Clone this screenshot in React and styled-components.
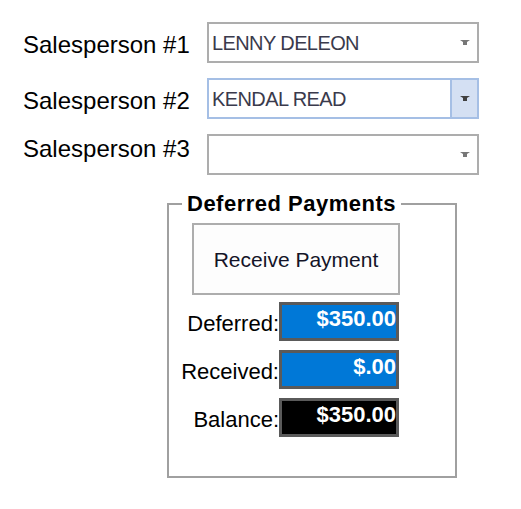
import React from 'react';
import styled, { createGlobalStyle } from 'styled-components';

const GlobalStyle = createGlobalStyle`
    html, body {
        margin: 0;
        padding: 0;
        background: #fff;
    }
    body {
        font-family: "Liberation Sans", Arial, sans-serif;
        color: #000;
    }
`

const Page = styled.div`
    padding: 22px 0 0 23px;
    width: 521px;
    height: 509px;
    box-sizing: border-box;
`

const SalesGrid = styled.div`
    display: grid;
    grid-template-columns: 184px 272px;
    grid-auto-rows: 41px;
    row-gap: 15px;
`

const SalesLabel = styled.div`
    font-size: 24px;
    line-height: 24px;
    padding-top: ${props => props.$lift ? '3px' : '11px'};
    white-space: nowrap;
`

const Combo = styled.div`
    display: flex;
    align-items: stretch;
    box-sizing: border-box;
    height: 41px;
    border: 2px solid ${props => props.$focused ? '#a5bfe5' : '#adadad'};
    background: #fff;
`

const ComboText = styled.div`
    flex: 1;
    display: flex;
    align-items: center;
    padding-left: 3px;
    font-size: 20px;
    line-height: 20px;
    letter-spacing: -0.6px;
    color: #3a3a4c;
    white-space: nowrap;
    overflow: hidden;
`

const DropButton = styled.div`
    width: 25px;
    display: flex;
    align-items: center;
    justify-content: center;
    border-left: 2px solid ${props => props.$focused ? '#a5bfe5' : 'transparent'};
    background: ${props => props.$focused ? '#d4e0f3' : 'transparent'};
`

const GroupBox = styled.fieldset`
    margin: 18px 0 0 144px;
    padding: 8px 0 39px 0;
    width: 290px;
    box-sizing: border-box;
    min-width: 0;
    border: 2px solid #a0a0a0;
`

const Legend = styled.legend`
    margin-left: 13px;
    padding: 0 5px;
    font-size: 22px;
    line-height: 22px;
    font-weight: bold;
    letter-spacing: 0.5px;
`

const ActionButton = styled.div`
    margin-left: 23px;
    width: 208px;
    height: 72px;
    box-sizing: border-box;
    border: 2px solid #adadad;
    background: #fdfdfd;
    display: flex;
    align-items: center;
    justify-content: center;
    font-size: 21px;
    line-height: 21px;
    color: #141428;
`

const AmountGrid = styled.div`
    margin-top: 7px;
    display: grid;
    grid-template-columns: 110px 120px;
    grid-auto-rows: 39px;
    row-gap: 9px;
`

const AmountLabel = styled.div`
    text-align: right;
    font-size: 22px;
    line-height: 22px;
    padding-top: 11px;
    white-space: nowrap;
`

const AmountField = styled.div`
    box-sizing: border-box;
    border: 3px solid #5a5a5a;
    background: ${props => props.$bg};
    color: #fff;
    font-weight: bold;
    font-size: 22px;
    line-height: 22px;
    text-align: right;
    padding: 3px 0 0 0;
    overflow: hidden;
    white-space: nowrap;
`

function Arrow({ dark }) {
    return (
        <svg width="10" height="5" viewBox="0 0 10 5">
            <polygon points="0,0 10,0 7,2 7,5 3,5 3,2" fill={dark ? '#404040' : '#777'} />
        </svg>
    );
}

const salespeople = [
    { label: 'Salesperson #1', value: 'LENNY DELEON' },
    { label: 'Salesperson #2', value: 'KENDAL READ', focused: true },
    { label: 'Salesperson #3', value: '', lift: true },
];

const amounts = [
    { label: 'Deferred:', value: '$350.00', bg: '#0078d7' },
    { label: 'Received:', value: '$.00', bg: '#0078d7' },
    { label: 'Balance:', value: '$350.00', bg: '#000' },
];

export default function App() {
    return (
        <Page>
            <GlobalStyle />
            <SalesGrid>
                {salespeople.map(s => (
                    <React.Fragment key={s.label}>
                        <SalesLabel $lift={s.lift}>{s.label}</SalesLabel>
                        <Combo $focused={s.focused}>
                            <ComboText>{s.value}</ComboText>
                            <DropButton $focused={s.focused}>
                                <Arrow dark={s.focused} />
                            </DropButton>
                        </Combo>
                    </React.Fragment>
                ))}
            </SalesGrid>
            <GroupBox>
                <Legend>Deferred Payments</Legend>
                <ActionButton>Receive Payment</ActionButton>
                <AmountGrid>
                    {amounts.map(a => (
                        <React.Fragment key={a.label}>
                            <AmountLabel>{a.label}</AmountLabel>
                            <AmountField $bg={a.bg}>{a.value}</AmountField>
                        </React.Fragment>
                    ))}
                </AmountGrid>
            </GroupBox>
        </Page>
    );
}
